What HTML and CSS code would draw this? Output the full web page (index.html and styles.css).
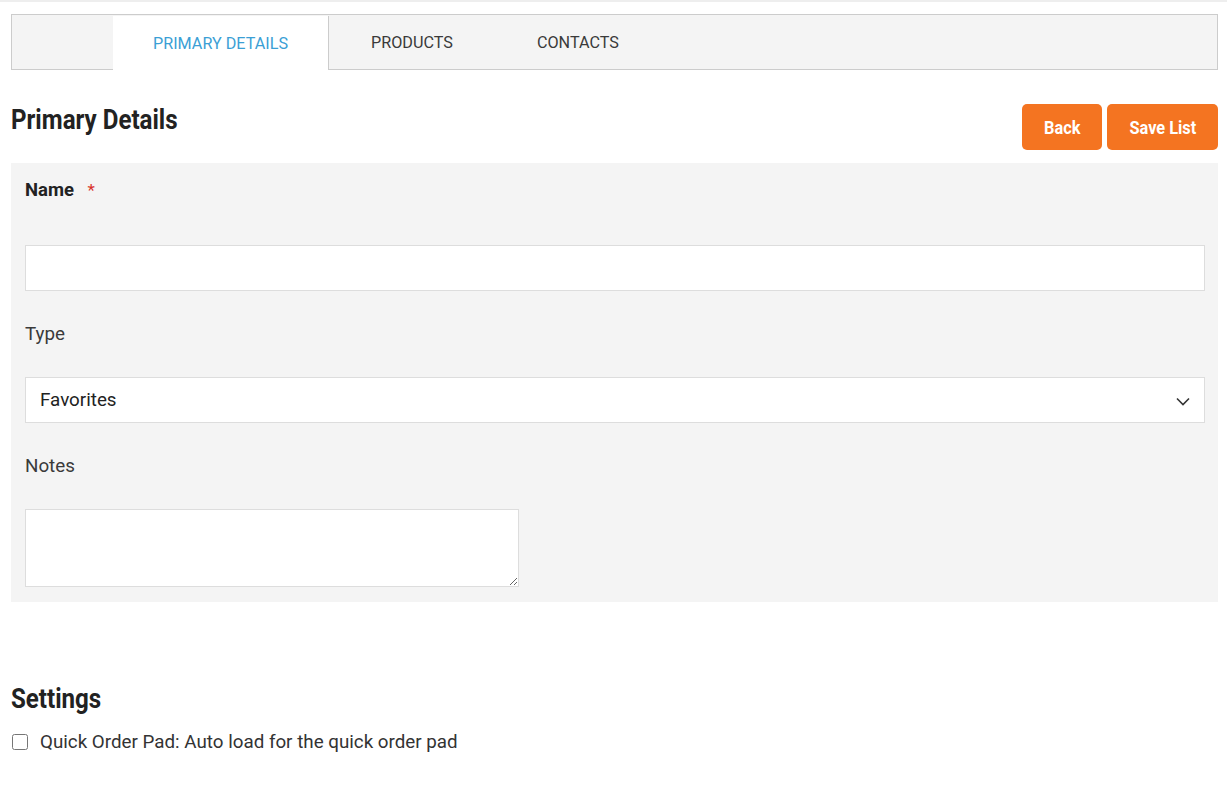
FILE: index.html
```
<!DOCTYPE html>
<html>
<head>
<meta charset="utf-8">
<link rel="stylesheet" href="styles.css">
</head>
<body>
<div class="topline"></div>
<div class="page">
  <div class="tabs">
    <div class="tab-spacer"></div>
    <div class="tab active">PRIMARY DETAILS</div>
    <div class="tab">PRODUCTS</div>
    <div class="tab">CONTACTS</div>
  </div>
  <div class="header-row">
    <h2 class="heading"><span>Primary Details</span></h2>
    <div class="actions">
      <button class="btn btn-back"><span>Back</span></button>
      <button class="btn btn-save"><span>Save List</span></button>
    </div>
  </div>
  <div class="panel">
    <label class="label label-bold">Name <span class="req">*</span></label>
    <input class="field" type="text">
    <label class="label">Type</label>
    <div class="select">
      <span>Favorites</span>
      <svg class="chev" width="14" height="9" viewBox="0 0 14 9"><path d="M1 1.5 L7 7.5 L13 1.5" fill="none" stroke="#333" stroke-width="1.6"/></svg>
    </div>
    <label class="label">Notes</label>
    <textarea class="notes"></textarea>
  </div>
  <h2 class="heading settings"><span>Settings</span></h2>
  <label class="check-row"><input type="checkbox" class="check"> Quick Order Pad: Auto load for the quick order pad</label>
</div>
</body>
</html>
```
FILE: styles.css
```
html, body { margin: 0; padding: 0; background: #fff; }
body { font-family: Roboto, "Noto Sans", sans-serif; color: #333; }
.topline { height: 2px; background: #eeeeee; }
.page { padding: 12px 9px 40px 11px; }
.tabs {
  display: flex; background: #f4f4f4;
  border: 1px solid #cccccc; box-sizing: border-box; height: 56px;
}
.tab-spacer { width: 101px; }
.tab {
  display: flex; align-items: center; justify-content: center;
  font-size: 16.2px; color: #3a3a3a; padding: 0 42px; margin-top: 1px;
}
.tab.active {
  background: #fff; color: #3b9fd5; border-right: 1px solid #cccccc;
  margin-bottom: -1px; padding: 0; width: 216px; box-sizing: border-box;
}
.header-row { display: flex; justify-content: space-between; align-items: flex-start; margin-top: 34px; }
.heading {
  margin: 0; font-size: 27px; font-weight: 700; color: #222; line-height: 32px;
}
.heading span { display: inline-block; transform: scaleX(0.893); transform-origin: left center; }
.actions { display: flex; gap: 5px; }
.btn {
  background: #f47421; color: #fff; border: none; border-radius: 5px; height: 46px;
  font-family: Roboto, sans-serif; font-weight: 700; font-size: 19px; padding: 0;
  display: flex; align-items: center; justify-content: center;
}
.btn span { display: inline-block; transform: scaleX(0.86); }
.btn-back { width: 80px; }
.btn-save { width: 111px; }
.panel {
  background: #f4f4f4; margin-top: 13px; padding: 16px 13px 15px 14px;
  display: flex; flex-direction: column;
}
.label { font-size: 18.8px; color: #3a3a3a; line-height: 22px; }
.label-bold { font-weight: 700; color: #222; font-size: 18.5px; }
.req { color: #d9342b; font-weight: 400; margin-left: 9px; font-size: 17px; }
.field {
  margin-top: 44px; height: 46px; border: 1px solid #dddddd; background: #fff;
  box-sizing: border-box; margin-bottom: 32px; width: 100%;
}
.select {
  margin-top: 32px; height: 46px; border: 1px solid #dddddd; background: #fff;
  box-sizing: border-box; display: flex; align-items: center; justify-content: space-between;
  padding: 0 14px 0 14px; font-size: 18.8px; color: #222; margin-bottom: 32px;
}
.chev { margin-top: 2px; }
.notes {
  margin-top: 32px; width: 494px; height: 78px; border: 1px solid #dddddd;
  background: #fff; box-sizing: border-box; resize: vertical; display: block; padding: 0;
}
.settings { margin-top: 81px; }
.check-row {
  display: flex; align-items: center; font-size: 18.8px; color: #333; margin-top: 16px; gap: 12px;
}
.check { width: 16px; height: 16px; margin: 0 0 0 1px; }
```
